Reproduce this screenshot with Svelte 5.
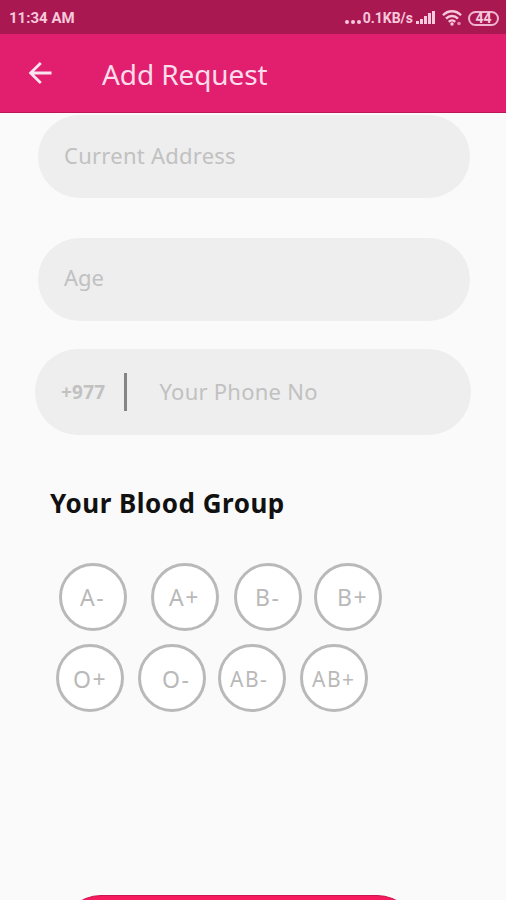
<script>
  const rows = [
    [
      { name: 'A-', gap: 0, indent: 18 },
      { name: 'A+', gap: 24, indent: 15 },
      { name: 'B-', gap: 15, indent: 18 },
      { name: 'B+', gap: 12, indent: 20 }
    ],
    [
      { name: 'O+', gap: 0, indent: 14 },
      { name: 'O-', gap: 14, indent: 21 },
      { name: 'AB-', gap: 12, indent: 9 },
      { name: 'AB+', gap: 14, indent: 9 }
    ]
  ];
  const bars = [3, 5, 8, 11, 13];

  let selected = $state('');
</script>

<div class="screen">
  <div class="status">
    <span class="time">11:34 AM</span>
    <div class="indicators">
      <i class="dot"></i><i class="dot"></i><i class="dot"></i>
      <span class="speed">0.1KB/s</span>
      <div class="signal">
        {#each bars as height}
          <i style="height: {height}px"></i>
        {/each}
      </div>
      <svg class="wifi" width="20" height="16" viewBox="0 0 20 16" fill="none" stroke="#f6c9dc" stroke-width="2.4">
        <path d="M1 5.2C6-.1 14-.1 19 5.2M4 8.600c3.400-3.500 8.600-3.500 12 0M6.800 11.800c1.800-1.700 4.600-1.700 6.400 0" />
        <circle cx="10" cy="14" r="1.700" fill="#f6c9dc" stroke="none" />
        <circle cx="17" cy="13.500" r="1.800" fill="#e884b0" stroke="none" />
      </svg>
      <div class="battery"><span>44</span></div>
    </div>
  </div>

  <header>
    <svg width="24" height="24" viewBox="0 0 24 24" fill="none" stroke="#fce4ef" stroke-width="2.8">
      <path d="M23.500 12H2.500M12.800 2L2.600 12l10.200 10" />
    </svg>
    <h1>Add Request</h1>
  </header>

  <main>
    <div class="field address"><span>Current Address</span></div>
    <div class="field age"><span>Age</span></div>
    <div class="field phone">
      <b>+977</b>
      <i class="divider"></i>
      <span>Your Phone No</span>
    </div>

    <h2>Your Blood Group</h2>

    <div class="groups">
      {#each rows as row, i}
        <div class="row" class:second={i === 1}>
          {#each row as group}
            <button
              class:small={group.name.length > 2}
              aria-pressed={selected === group.name}
              style="margin-left: {group.gap}px; padding-left: {group.indent}px"
              onclick={() => (selected = group.name)}
            >{group.name}</button>
          {/each}
        </div>
      {/each}
    </div>

    <div class="submit"></div>
  </main>
</div>

<style>
  :global(body) {
    margin: 0;
    background: #fafafa;
  }

  .screen {
    width: 506px;
    height: 900px;
    overflow: hidden;
    display: flex;
    flex-direction: column;
    background: #fafafa;
    font-family: 'Noto Sans', sans-serif;
  }

  .status {
    flex: none;
    box-sizing: border-box;
    height: 34px;
    padding: 2px 7px 0 9px;
    display: flex;
    align-items: center;
    justify-content: space-between;
    background: #aa1852;
    color: #f6c9dc;
    font-family: Roboto, sans-serif;
    font-weight: 700;
  }
  .time {
    font-size: 15px;
    line-height: 20px;
  }
  .indicators {
    display: flex;
    align-items: center;
  }
  .dot {
    width: 4px;
    height: 4px;
    margin: 8px 2px 0 0;
    border-radius: 50%;
    background: #f6c9dc;
  }
  .speed {
    font-size: 14px;
    line-height: 20px;
  }
  .signal {
    display: flex;
    align-items: flex-end;
    gap: 1px;
    height: 13px;
    margin: 0 7px 1px 3px;
  }
  .signal i {
    width: 3px;
    background: #f6c9dc;
  }
  .battery {
    box-sizing: border-box;
    width: 31px;
    height: 15px;
    margin-left: 6px;
    border: 2px solid #f0b4ce;
    border-radius: 8px;
    font-size: 14px;
    line-height: 11px;
    text-align: center;
  }

  header {
    flex: none;
    box-sizing: border-box;
    height: 79px;
    padding: 0 28px;
    display: flex;
    align-items: center;
    background: #e21f6f;
    border-bottom: 1px solid #bd1659;
  }
  h1 {
    margin: 2px 0 0 50px;
    color: #fbdcea;
    font-size: 28px;
    font-weight: 400;
    letter-spacing: -0.1px;
    line-height: 38px;
  }

  main {
    display: flex;
    flex-direction: column;
  }
  .field {
    flex: none;
    box-sizing: border-box;
    display: flex;
    align-items: center;
    height: 83px;
    margin: 2px 36px 0 38px;
    padding: 0 0 4px 26px;
    border-radius: 42px;
    background: #eee;
    color: #c1c1c1;
    font-size: 22px;
    letter-spacing: 0.25px;
    line-height: 30px;
  }
  .age {
    margin-top: 39.5px;
    padding-bottom: 5px;
    letter-spacing: 0;
  }
  .phone {
    height: 86px;
    margin: 28.5px 35px 0 35px;
    padding-bottom: 0;
    border-radius: 43px;
  }
  .phone span {
    margin-bottom: 2px;
  }
  .phone b {
    font-size: 19px;
  }
  .divider {
    width: 3px;
    height: 38px;
    margin: 0 32px 0 19px;
    background: #858585;
  }

  h2 {
    margin: 50px 0 0 50px;
    color: #111;
    font-size: 26px;
    font-weight: 700;
    letter-spacing: 0.5px;
    line-height: 36px;
  }

  .groups {
    margin: 42px 0 0 59px;
  }
  .row {
    display: flex;
  }
  .row.second {
    margin: 13px 0 0 -3px;
  }
  button {
    flex: none;
    box-sizing: border-box;
    width: 68px;
    height: 68px;
    padding: 0;
    border: 3px solid #b9b9b9;
    border-radius: 50%;
    background: #fff;
    color: #b9b9b9;
    font-family: inherit;
    font-size: 23px;
    font-weight: 400;
    letter-spacing: 1.5px;
    text-align: left;
    white-space: nowrap;
  }
  .second button {
    padding-top: 2px;
  }
  button.small {
    font-size: 21px;
  }

  .submit {
    flex: none;
    box-sizing: border-box;
    width: 356px;
    height: 80px;
    margin: 183px 0 0 61px;
    border-top: 1px solid #c91650;
    border-radius: 40px;
    background: #f51b5d;
  }
</style>
